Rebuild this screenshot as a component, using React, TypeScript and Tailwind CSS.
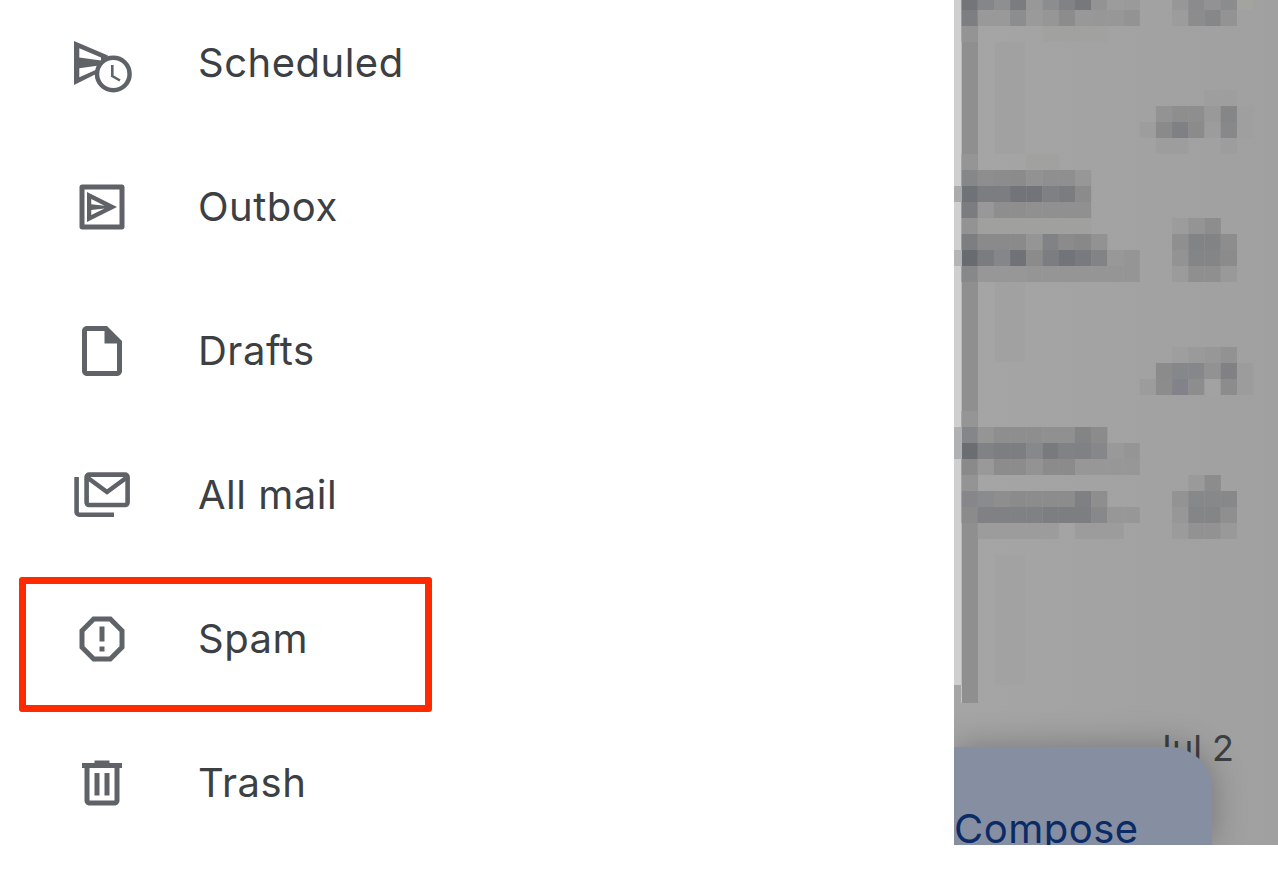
import type { ReactNode } from "react";

const ICON = "#5f6368";

function ScheduledIcon() {
  return (
    <svg width={60} height={60} viewBox="0 0 60 60" fill="none">
      <path
        fillRule="evenodd"
        fill={ICON}
        d="M2 8L36 22.5L30 38L2 52ZM7.3 15.3V24.5L29 27.5V24.5ZM7.3 35.3V44.3L27 35.5V32.5Z"
      />
      <circle cx={41.3} cy={41} r={16.3} fill="#fff" stroke={ICON} strokeWidth={4.5} />
      <path d="M40.3 32V43L48 47.5" stroke={ICON} strokeWidth={2.6} />
    </svg>
  );
}

function OutboxIcon() {
  return (
    <svg width={60} height={60} viewBox="0 0 24 24" fill={ICON}>
      <path
        fillRule="evenodd"
        d="M4 3H20C20.55 3 21 3.45 21 4V20C21 20.55 20.55 21 20 21H4C3.45 21 3 20.55 3 20V4C3 3.45 3.45 3 4 3ZM5 5V19H19V5Z"
      />
      <path
        fillRule="evenodd"
        d="M6 6L18 12L6 18ZM7.7 8.8V10.9L13 11.5ZM7.7 15.2L13 12.6L7.7 13.2Z"
      />
    </svg>
  );
}

function DraftsIcon() {
  return (
    <svg width={60} height={60} viewBox="0 0 24 24" fill={ICON}>
      <path d="M14 2H6c-1.1 0-2 .9-2 2v16c0 1.1.9 2 2 2h12c1.1 0 2-.9 2-2V8l-6-6zM6 20V4h7v5h5v11H6z" />
    </svg>
  );
}

function AllMailIcon() {
  return (
    <svg width={60} height={60} viewBox="0 0 60 60" fill="none" stroke={ICON} strokeWidth={4.6}>
      <rect x={14.6} y={9.6} width={41} height={30.4} rx={2.5} />
      <path d="M16 13L35 27L54 13" />
      <path d="M4.6 12V47C4.6 48.6 5.8 49.7 7.4 49.7H42" />
    </svg>
  );
}

function SpamIcon() {
  return (
    <svg width={60} height={60} viewBox="0 0 24 24" fill={ICON}>
      <path d="M15.73 3H8.27L3 8.27v7.46L8.27 21h7.46L21 15.73V8.27L15.73 3zM19 14.9L14.9 19H9.1L5 14.9V9.1L9.1 5h5.8L19 9.1v5.8z" />
      <path d="M11 7h2v6h-2zm0 8h2v2h-2z" />
    </svg>
  );
}

function TrashIcon() {
  return (
    <svg width={60} height={60} viewBox="0 0 24 24" fill={ICON}>
      <path d="M15 4V3H9v1H4v2h1v13c0 1.1.9 2 2 2h10c1.1 0 2-.9 2-2V6h1V4h-5zm2 15H7V6h10v13zM9 8h2v9H9zm4 0h2v9h-2z" />
    </svg>
  );
}

function MenuRow({ icon, label, children }: { icon: ReactNode; label: string; children?: ReactNode }) {
  return (
    <div className="relative flex h-[144px] items-center pl-[72px]">
      {icon}
      <span className="ml-[66px] text-[40px] leading-none tracking-[0.5px] text-[#3c4043]">{label}</span>
      {children}
    </div>
  );
}

// the blurred inbox behind the drawer: [top, [column, colour], ...]
const mosaic: [number, ...[number, string][]][] = [
  [-6, [0, "#737578"], [1, "#84868a"], [2, "#8e8f91"], [3, "#7a7c80"], [4, "#989898"], [5, "#8c8d8f"], [6, "#808285"], [7, "#76787c"], [8, "#939393"], [9, "#9c9c9c"], [10, "#9a9a9a"], [13, "#979797"], [14, "#8a8b8c"], [15, "#929292"], [16, "#8b8c8e"], [17, "#a3a3a0"]],
  [10, [0, "#7c7e82"], [1, "#999999"], [2, "#999999"], [3, "#8c8d8e"], [4, "#9a9a9a"], [5, "#969696"], [6, "#8c8c8d"], [7, "#989898"], [8, "#979797"], [9, "#979797"], [10, "#939393"], [13, "#9c9c9c"], [14, "#8c8c8d"], [15, "#868788"], [16, "#939393"]],
  [26, [0, "#949494"], [5, "#a1a1a0"], [6, "#a1a1a0"], [7, "#a1a1a0"], [8, "#a1a1a0"]],
  [90, [15, "#9e9e9e"], [16, "#9e9e9e"]],
  [106, [12, "#939394"], [13, "#8e8e8f"], [14, "#8e8e8f"], [15, "#999999"], [16, "#858687"], [17, "#9f9f9f"]],
  [122, [11, "#9d9d9d"], [12, "#8a8a8b"], [13, "#7e8083"], [14, "#8b8b8c"], [15, "#9c9c9c"], [16, "#87888a"], [17, "#9f9f9f"]],
  [138, [12, "#9d9d9d"], [13, "#9d9d9d"], [16, "#9d9d9d"]],
  [154, [0, "#959595"], [4, "#a1a1a0"], [5, "#a1a1a0"]],
  [170, [0, "#868788"], [1, "#8e8e8e"], [2, "#8c8c8d"], [3, "#8b8b8b"], [4, "#929292"], [5, "#8f8f90"], [6, "#8f8f8f"], [7, "#979797"]],
  [186, [0, "#6f7276"], [1, "#7b7d81"], [2, "#7b7d81"], [3, "#717478"], [4, "#717478"], [5, "#7e8083"], [6, "#7a7c80"], [7, "#8b8b8c"]],
  [202, [0, "#7a7c80"], [1, "#989898"], [2, "#8e8e8e"], [3, "#8e8e8e"], [4, "#909090"], [5, "#909090"], [6, "#909090"], [7, "#909090"]],
  [218, [0, "#939393"], [1, "#a0a09f"], [2, "#a0a09f"], [3, "#a0a09f"], [4, "#a0a09f"], [5, "#a0a09f"], [6, "#a0a09f"], [7, "#a0a09f"], [13, "#9c9c9c"], [14, "#949494"], [15, "#8d8d8e"]],
  [234, [0, "#7c7e81"], [1, "#8a8a8a"], [2, "#8a8a8a"], [3, "#8a8a8a"], [4, "#959595"], [5, "#808285"], [6, "#8b8b8c"], [7, "#888888"], [8, "#929292"], [13, "#8f8f8f"], [14, "#828385"], [15, "#828385"], [16, "#8d8d8d"]],
  [250, [0, "#686b6f"], [1, "#7a7c80"], [2, "#84868a"], [3, "#6f7276"], [4, "#8b8b8b"], [5, "#7b7d81"], [6, "#717478"], [7, "#787a7e"], [8, "#828385"], [9, "#989898"], [10, "#959595"], [13, "#939393"], [14, "#848586"], [15, "#848586"], [16, "#8b8b8c"]],
  [266, [0, "#87888a"], [1, "#979797"], [2, "#979797"], [3, "#979797"], [4, "#959595"], [5, "#959595"], [6, "#959595"], [7, "#959595"], [8, "#959595"], [9, "#959595"], [10, "#959595"], [13, "#9b9b9b"], [14, "#8f8f8f"], [15, "#8f8f8f"], [16, "#999999"]],
  [347, [13, "#9e9e9e"], [14, "#9a9a9a"], [15, "#979797"], [16, "#929292"]],
  [363, [12, "#8b8b8c"], [13, "#86878a"], [14, "#86878a"], [15, "#929292"], [16, "#7f8184"], [17, "#9c9c9c"]],
  [379, [11, "#9c9c9c"], [12, "#8c8c8c"], [13, "#82838a"], [14, "#8d8d8d"], [15, "#a2a2a2"], [16, "#8c8c8c"], [17, "#9c9c9c"]],
  [411, [0, "#959595"]],
  [427, [0, "#85868a"], [1, "#959595"], [2, "#8e8e8e"], [3, "#8e8e8e"], [4, "#8e8e8e"], [5, "#909090"], [6, "#909090"], [7, "#838486"], [8, "#8b8b8b"]],
  [443, [0, "#6a6e73"], [1, "#808285"], [2, "#7c7e82"], [3, "#7c7e82"], [4, "#87888a"], [5, "#787a7e"], [6, "#808285"], [7, "#7f8184"], [8, "#86878a"], [9, "#999999"], [10, "#959595"]],
  [459, [0, "#8a8a8b"], [1, "#999999"], [2, "#8c8c8c"], [3, "#8c8c8c"], [4, "#939393"], [5, "#8b8b8b"], [6, "#8b8b8b"], [7, "#979797"], [8, "#979797"], [9, "#979797"], [10, "#979797"]],
  [475, [0, "#949494"], [14, "#9a9a9a"], [15, "#8c8c8c"]],
  [491, [0, "#86878a"], [1, "#8a8b8c"], [2, "#8e8e8e"], [3, "#8b8b8b"], [4, "#8c8c8c"], [5, "#8c8c8c"], [6, "#8c8c8c"], [7, "#7e8083"], [8, "#8e8e8e"], [13, "#939393"], [14, "#878889"], [15, "#878889"], [16, "#878889"]],
  [507, [0, "#8b8b8b"], [1, "#7f8184"], [2, "#7f8184"], [3, "#7f8184"], [4, "#7f8184"], [5, "#7c7e82"], [6, "#7c7e82"], [7, "#7c7e82"], [8, "#87888a"], [9, "#979797"], [10, "#979797"], [13, "#979797"], [14, "#848586"], [15, "#848586"], [16, "#8f8f8f"]],
  [523, [1, "#9c9c9c"], [2, "#9c9c9c"], [3, "#9c9c9c"], [4, "#9c9c9c"], [5, "#9c9c9c"], [7, "#9c9c9c"], [8, "#9c9c9c"], [9, "#9c9c9c"], [13, "#9b9b9b"], [14, "#929292"], [15, "#929292"], [16, "#999999"]],
];

function Mosaic() {
  return (
    <svg width={324} height={760} className="absolute top-0 left-0">
      <rect x={0} y={0} width={7.5} height={685} fill="#cfcfcf" />
      <rect x={7} y={685} width={1} height={18} fill="#c4c4c4" />
      <rect x={8} y={0} width={16} height={703} fill="#8f8f8f" />
      <rect x={41} y={42} width={30} height={112} fill="#a1a1a1" />
      <rect x={41} y={282} width={30} height={80} fill="#a1a1a1" />
      <rect x={41} y={555} width={30} height={130} fill="#a2a2a2" />
      {mosaic.map(([top, ...cells]) =>
        cells.map(([col, fill]) => (
          <rect key={`${top}-${col}`} x={7.5 + col * 16.2} y={top} width={16.3} height={16} fill={fill} />
        )),
      )}
      <rect x={0} y={186} width={8} height={16} fill="#a9abad" />
      <rect x={0} y={250} width={8} height={16} fill="#b3b4b5" />
      <rect x={0} y={427} width={8} height={32} fill="#b0b1b2" />
    </svg>
  );
}

function BlurredInbox() {
  return (
    <div className="relative flex h-[845px] w-[324px] flex-col justify-end overflow-hidden bg-gradient-to-r from-[#a5a5a5] to-[#a0a0a0]">
      <Mosaic />
      <span className="relative mr-[44px] self-end text-[36px] leading-[36px] text-[#3c4043]">Jul 2</span>
      <div className="relative -mt-[19px] h-[98px] w-[258px] rounded-tr-[42px] bg-[#858fa1] pt-[58px] shadow-[0_0_34px_rgba(0,0,0,0.28)]">
        <span className="block text-[40px] leading-[48px] tracking-[0.5px] whitespace-nowrap text-[#0b2a66]">Compose</span>
      </div>
    </div>
  );
}

export default function App() {
  return (
    <div className="flex h-[876px] w-[1278px] items-start overflow-hidden bg-white [font-family:Inter,sans-serif]">
      <div className="-mt-[9px] w-[954px]">
        <MenuRow icon={<ScheduledIcon />} label="Scheduled" />
        <MenuRow icon={<OutboxIcon />} label="Outbox" />
        <MenuRow icon={<DraftsIcon />} label="Drafts" />
        <MenuRow icon={<AllMailIcon />} label="All mail" />
        <MenuRow icon={<SpamIcon />} label="Spam">
          <div className="absolute top-[10px] left-[19px] h-[135px] w-[413px] rounded-[3px] border-[7px] border-[#ff2a00]" />
        </MenuRow>
        <MenuRow icon={<TrashIcon />} label="Trash" />
      </div>
      <BlurredInbox />
    </div>
  );
}
